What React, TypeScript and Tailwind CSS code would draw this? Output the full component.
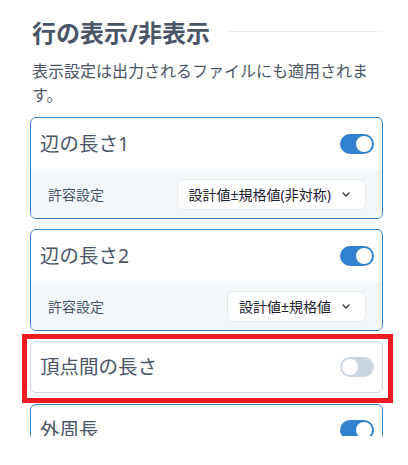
import React from "react";

const FONT = { fontFamily: '"Noto Sans", "Noto Sans CJK JP", sans-serif' };

function Toggle({ on }: { on: boolean }) {
  return (
    <div
      className={
        on
          ? "w-[34px] h-5 rounded-full bg-[#3182ce] p-[2px] flex justify-end shrink-0"
          : "w-[34px] h-5 rounded-full bg-[#cbd5e0] p-[2px] flex justify-start shrink-0"
      }
    >
      <div className="w-4 h-4 rounded-full bg-white" />
    </div>
  );
}

function Chevron() {
  return (
    <svg width="8" height="5" viewBox="0 0 8 5" fill="none" className="shrink-0">
      <path d="M1 1 L4 4 L7 1" stroke="#2d3748" strokeWidth="1.4" strokeLinecap="round" strokeLinejoin="round" />
    </svg>
  );
}

function Card({ title, on, select }: { title: string; on: boolean; select?: string }) {
  return (
    <div
      className={
        on
          ? "border border-[#3182ce] rounded-md bg-white overflow-hidden"
          : "border border-[#cbd5e0] rounded-md bg-white overflow-hidden"
      }
    >
      <div className={select ? "h-[52px] flex items-center justify-between pl-[9px] pr-[8px]" : "h-[50px] flex items-center justify-between pl-[9px] pr-[8px]"}>
        <span className="text-[19.5px] leading-none text-[#4a5568]">{title}</span>
        <Toggle on={on} />
      </div>
      {select && (
        <div className="h-[48px] bg-[#f4f7fa] flex items-center justify-between pl-[17px] pr-[16px]">
          <span className="text-[14px] text-[#4a5568]">許容設定</span>
          <div className="h-[31px] border border-[#e2e8f0] rounded-md bg-white pl-[11px] pr-[15px] flex items-center gap-[11px] text-[14px] text-[#1a202c]">
            <span>{select}</span>
            <Chevron />
          </div>
        </div>
      )}
    </div>
  );
}

export default function App() {
  return (
    <div className="w-[408px] h-[436px] overflow-hidden bg-white" style={FONT}>
      <div className="pl-[30px] pr-[25px] pt-[18px]">
        <div className="flex items-center gap-[18px]">
          <h2 className="pl-[2px] text-[24px] font-bold leading-[29px] text-[#4a5568]">行の表示/非表示</h2>
          <div className="flex-1 h-px bg-[#e8edf3] -mt-[3px]" />
        </div>
        <p className="mt-[12px] pl-[2px] text-[16px] leading-[24px] text-[#4a5568]">
          表示設定は出力されるファイルにも適用されます。
        </p>
        <div className="mt-[10px] flex flex-col gap-[10px]">
          <Card title="辺の長さ1" on select="設計値±規格値(非対称)" />
          <Card title="辺の長さ2" on select="設計値±規格値" />
          <div className="relative">
            <Card title="頂点間の長さ" on={false} />
            <div className="absolute left-[-8px] top-[-7px] w-[371px] h-[69px] border-[5px] border-[#ed1c24]" />
          </div>
          <div className="mt-px">
            <Card title="外周長" on />
          </div>
        </div>
      </div>
    </div>
  );
}
